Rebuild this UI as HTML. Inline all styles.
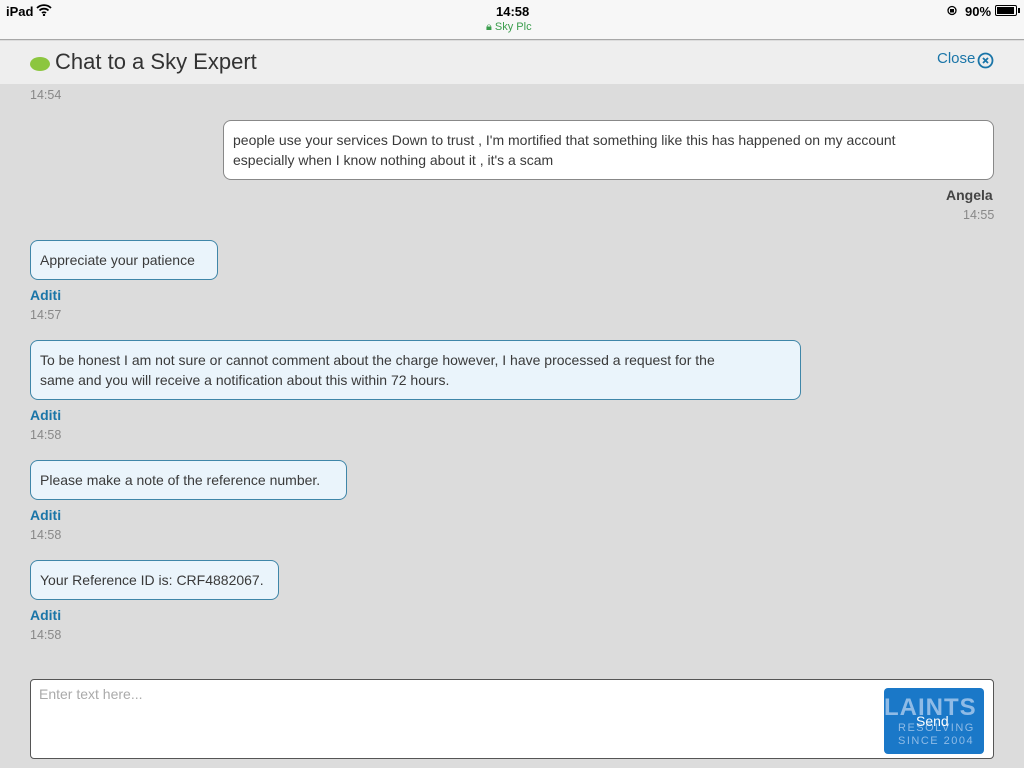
<!DOCTYPE html>
<html><head><meta charset="utf-8"><style>
*{margin:0;padding:0;box-sizing:border-box}
body{width:1024px;height:768px;overflow:hidden;background:#dcdcdc;font-family:"Liberation Sans",sans-serif;position:relative;color:#333}
.abs{position:absolute}
.status{left:0;top:0;width:1024px;height:40px;background:#f7f7f7;border-bottom:1px solid #a8a8a8}
.hdr{left:0;top:41px;width:1024px;height:43px;background:#eeeeee}
.b{position:absolute;border-radius:8px;font-size:14px;line-height:20px;padding:9px 9px;white-space:nowrap;color:#3a3a3a}
.ag{background:#eaf4fb;border:1px solid #3f86a8}
.us{background:#fff;border:1px solid #888}
.nm{position:absolute;font-size:14px;font-weight:bold;color:#1a75a8}
.tm{position:absolute;font-size:12.5px;color:#888}
</style></head><body>
<div class="abs status">
 <div class="abs" style="left:6px;top:4px;font-size:13px;font-weight:bold;color:#000">iPad</div>
 <svg class="abs" style="left:36px;top:4px" width="16" height="12" viewBox="0 0 16 12"><path d="M1 4a10 10 0 0 1 14 0M3.5 6.5a6.5 6.5 0 0 1 9 0M6 9a3 3 0 0 1 4 0" stroke="#000" stroke-width="1.8" fill="none"/><circle cx="8" cy="11" r="1.2"/></svg>
 <div class="abs" style="left:496px;top:4px;font-size:13px;font-weight:bold;color:#000">14:58</div>
 <div class="abs" style="left:486px;top:21px;font-size:11px;color:#3a9d4c">🔒︎ Sky Plc</div>
 <svg class="abs" style="left:946px;top:5px" width="12" height="11" viewBox="0 0 12 11"><circle cx="6" cy="5.5" r="4" stroke="#000" stroke-width="1.3" fill="none"/><rect x="4" y="4" width="4" height="3.5"/></svg>
 <div class="abs" style="left:965px;top:4px;font-size:13px;font-weight:bold;color:#000">90%</div>
 <div class="abs" style="left:995px;top:5px;width:22px;height:11px;border:1px solid #000;border-radius:2px;padding:1px"><div style="width:17px;height:7px;background:#000"></div></div>
 <div class="abs" style="left:1018px;top:8px;width:2px;height:5px;background:#000"></div>
</div>
<div class="abs hdr">
 <div class="abs" style="left:30px;top:16px;width:20px;height:14px;border-radius:50%;background:#8cc63f"></div>
 <div class="abs" style="left:55px;top:8px;font-size:22px;color:#333">Chat to a Sky Expert</div>
 <div class="abs" style="left:937px;top:9px;font-size:15px;color:#1a75a8">Close</div>
 <svg class="abs" style="left:977px;top:11px" width="17" height="17" viewBox="0 0 17 17"><circle cx="8.5" cy="8.5" r="7" stroke="#1a75a8" stroke-width="1.8" fill="none"/><path d="M6 6l5 5M11 6l-5 5" stroke="#1a75a8" stroke-width="1.8"/></svg>
</div>
<div class="tm" style="left:30px;top:88px">14:54</div>
<div class="b us" style="left:223px;top:120px;width:771px;height:60px">people use your services Down to trust , I'm mortified that something like this has happened on my account<br>especially when I know nothing about it , it's a scam</div>
<div class="nm" style="left:946px;top:187px;color:#444">Angela</div>
<div class="tm" style="left:963px;top:208px">14:55</div>
<div class="b ag" style="left:30px;top:240px;width:188px;height:40px">Appreciate your patience</div>
<div class="nm" style="left:30px;top:287px">Aditi</div>
<div class="tm" style="left:30px;top:308px">14:57</div>
<div class="b ag" style="left:30px;top:340px;width:771px;height:60px">To be honest I am not sure or cannot comment about the charge however, I have processed a request for the<br>same and you will receive a notification about this within 72 hours.</div>
<div class="nm" style="left:30px;top:407px">Aditi</div>
<div class="tm" style="left:30px;top:428px">14:58</div>
<div class="b ag" style="left:30px;top:460px;width:317px;height:40px">Please make a note of the reference number.</div>
<div class="nm" style="left:30px;top:507px">Aditi</div>
<div class="tm" style="left:30px;top:528px">14:58</div>
<div class="b ag" style="left:30px;top:560px;width:249px;height:40px">Your Reference ID is: CRF4882067.</div>
<div class="nm" style="left:30px;top:607px">Aditi</div>
<div class="tm" style="left:30px;top:628px">14:58</div>
<div class="abs" style="left:30px;top:679px;width:964px;height:80px;background:#fff;border:1px solid #555;border-radius:4px">
 <div class="abs" style="left:8px;top:6px;font-size:14px;color:#aaa">Enter text here...</div>
 <div class="abs" style="left:853px;top:8px;width:100px;height:66px;background:#1a78c8;border-radius:4px;overflow:hidden;color:#8fbbe6">
  <div class="abs" style="left:0;top:6px;font-size:24px;font-weight:bold;letter-spacing:1px">LAINTS</div>
  <div class="abs" style="left:14px;top:34px;font-size:11px;letter-spacing:1.5px;line-height:13px">RESOLVING<br>SINCE 2004</div>
  <div class="abs" style="left:32px;top:25px;font-size:14px;color:#fff">Send</div>
 </div>
</div>
</body></html>
